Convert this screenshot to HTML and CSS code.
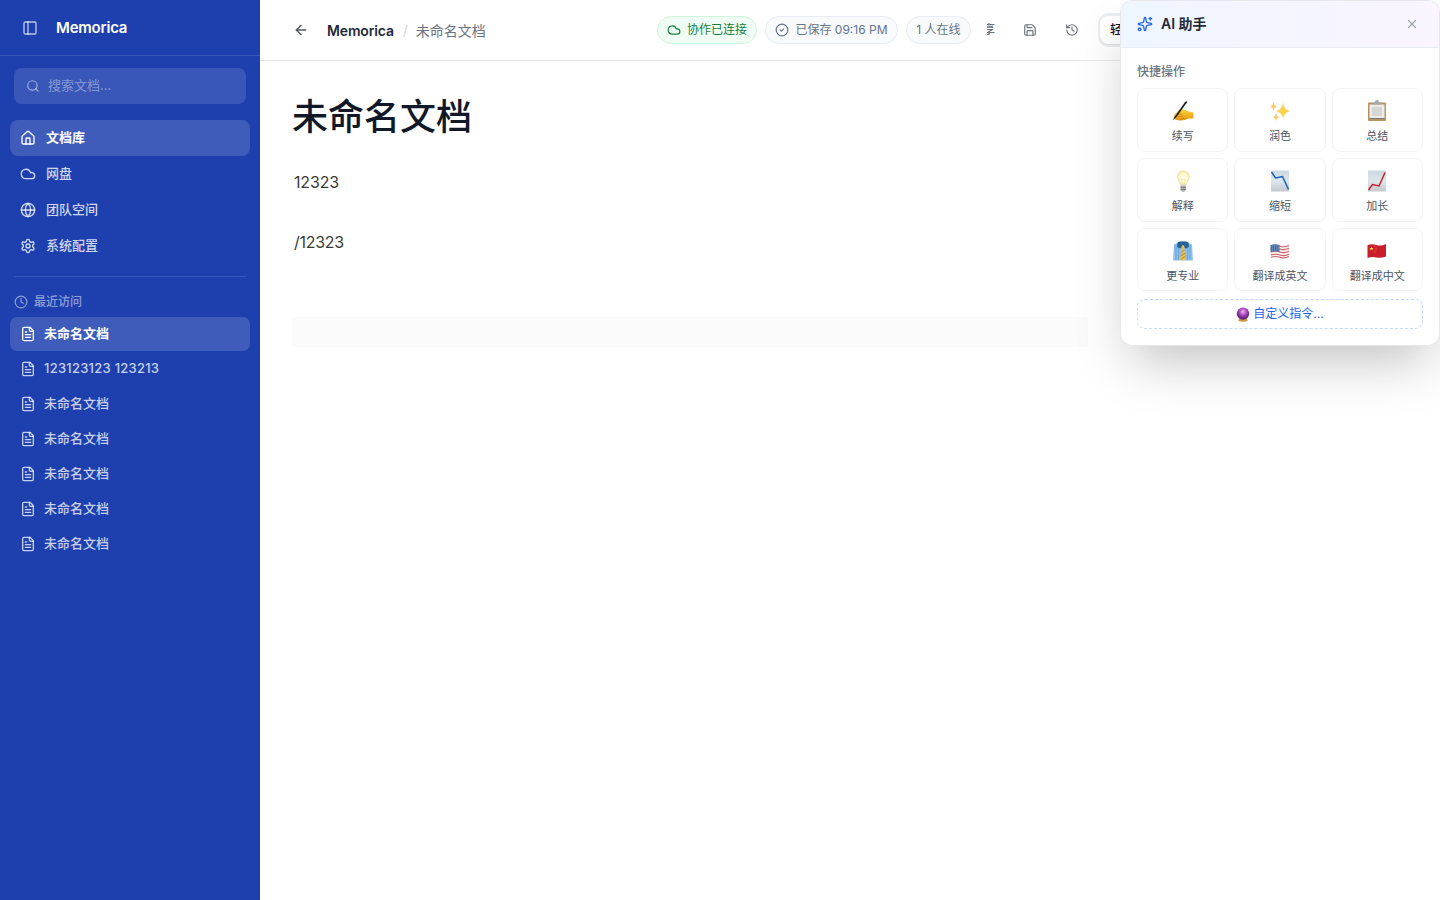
FILE: index.html
```html
<!DOCTYPE html>
<html lang="zh-CN">
<head>
<meta charset="utf-8">
<title>Memorica</title>
<link rel="stylesheet" href="styles.css">
</head>
<body>
<svg class="defs" width="0" height="0">
  <defs>
    <symbol id="cloud" viewBox="0 0 24 24"><path d="M17.5 19H9a7 7 0 1 1 6.71-9h1.79a4.5 4.5 0 1 1 0 9Z"/></symbol>
    <symbol id="file" viewBox="0 0 24 24"><path d="M15 2H6a2 2 0 0 0-2 2v16a2 2 0 0 0 2 2h12a2 2 0 0 0 2-2V7Z"/><path d="M14 2v4a2 2 0 0 0 2 2h4"/><path d="M10 9H8"/><path d="M16 13H8"/><path d="M16 17H8"/></symbol>
    <linearGradient id="paper" x1="0" y1="0" x2="0" y2="1"><stop offset="0" stop-color="#cbd8e0"/><stop offset=".5" stop-color="#dce6ed"/><stop offset="1" stop-color="#c2c9ce"/></linearGradient>
    <linearGradient id="hand" x1="0" y1="0" x2="0" y2="1"><stop offset="0" stop-color="#ffd83c"/><stop offset="1" stop-color="#e59410"/></linearGradient>
    <radialGradient id="bulb"><stop offset="0" stop-color="#fffff8"/><stop offset=".6" stop-color="#fffad0"/><stop offset="1" stop-color="#f6e7a2"/></radialGradient>
    <radialGradient id="orb" cx=".5" cy=".35"><stop offset="0" stop-color="#f3b9f0"/><stop offset=".5" stop-color="#b853c6"/><stop offset="1" stop-color="#6d2587"/></radialGradient>
  </defs>
</svg>
<div class="app">
  <aside class="sidebar">
    <div class="brand">
      <svg class="icon s16 toggle" viewBox="0 0 24 24"><rect x="3" y="3" width="18" height="18" rx="2"/><path d="M9 3v18"/></svg>
      <span>Memorica</span>
    </div>
    <div class="search">
      <svg class="icon s14" viewBox="0 0 24 24"><circle cx="11" cy="11" r="8"/><path d="m21 21-4.3-4.3"/></svg>
      <span>搜索文档...</span>
    </div>
    <nav class="nav">
      <a class="nav-item active"><svg class="icon s16" viewBox="0 0 24 24"><path d="M15 21v-8a1 1 0 0 0-1-1h-4a1 1 0 0 0-1 1v8"/><path d="M3 10a2 2 0 0 1 .709-1.528l7-5.999a2 2 0 0 1 2.582 0l7 5.999A2 2 0 0 1 21 10v9a2 2 0 0 1-2 2H5a2 2 0 0 1-2-2z"/></svg>文档库</a>
      <a class="nav-item"><svg class="icon s16"><use href="#cloud"/></svg>网盘</a>
      <a class="nav-item"><svg class="icon s16" viewBox="0 0 24 24"><circle cx="12" cy="12" r="10"/><path d="M12 2a14.5 14.5 0 0 0 0 20 14.5 14.5 0 0 0 0-20"/><path d="M2 12h20"/></svg>团队空间</a>
      <a class="nav-item"><svg class="icon s16" viewBox="0 0 24 24"><path d="M12.22 2h-.44a2 2 0 0 0-2 2v.18a2 2 0 0 1-1 1.73l-.43.25a2 2 0 0 1-2 0l-.15-.08a2 2 0 0 0-2.73.73l-.22.38a2 2 0 0 0 .73 2.73l.15.1a2 2 0 0 1 1 1.72v.51a2 2 0 0 1-1 1.74l-.15.09a2 2 0 0 0-.73 2.73l.22.38a2 2 0 0 0 2.73.73l.15-.08a2 2 0 0 1 2 0l.43.25a2 2 0 0 1 1 1.73V20a2 2 0 0 0 2 2h.44a2 2 0 0 0 2-2v-.18a2 2 0 0 1 1-1.73l.43-.25a2 2 0 0 1 2 0l.15.08a2 2 0 0 0 2.73-.73l.22-.39a2 2 0 0 0-.73-2.73l-.15-.08a2 2 0 0 1-1-1.74v-.5a2 2 0 0 1 1-1.74l.15-.09a2 2 0 0 0 .73-2.73l-.22-.38a2 2 0 0 0-2.73-.73l-.15.08a2 2 0 0 1-2 0l-.43-.25a2 2 0 0 1-1-1.73V4a2 2 0 0 0-2-2z"/><circle cx="12" cy="12" r="3"/></svg>系统配置</a>
    </nav>
    <div class="divider"></div>
    <div class="recent-title"><svg class="icon s14" viewBox="0 0 24 24"><circle cx="12" cy="12" r="10"/><path d="M12 6v6l4 2"/></svg>最近访问</div>
    <div class="docs">
      <a class="doc active"><svg class="icon s16"><use href="#file"/></svg>未命名文档</a>
      <a class="doc latin"><svg class="icon s16"><use href="#file"/></svg>123123123 123213</a>
      <a class="doc"><svg class="icon s16"><use href="#file"/></svg>未命名文档</a>
      <a class="doc"><svg class="icon s16"><use href="#file"/></svg>未命名文档</a>
      <a class="doc"><svg class="icon s16"><use href="#file"/></svg>未命名文档</a>
      <a class="doc"><svg class="icon s16"><use href="#file"/></svg>未命名文档</a>
      <a class="doc"><svg class="icon s16"><use href="#file"/></svg>未命名文档</a>
    </div>
  </aside>
  <main class="main">
    <header class="topbar">
      <svg class="icon s16 back" viewBox="0 0 24 24"><path d="m12 19-7-7 7-7"/><path d="M19 12H5"/></svg>
      <div class="crumbs"><b>Memorica</b><i>/</i><span>未命名文档</span></div>
      <div class="tools">
        <span class="pill online"><svg class="icon s14"><use href="#cloud"/></svg>协作已连接</span>
        <span class="pill saved"><svg class="icon s14" viewBox="0 0 24 24"><circle cx="12" cy="12" r="10"/><path d="m9 12 2 2 4-4"/></svg>已保存 09:16 PM</span>
        <span class="pill users">1 人在线</span>
        <button class="share"><span>享</span></button>
        <button class="tool"><svg class="icon s14" viewBox="0 0 24 24"><path d="M15.2 3a2 2 0 0 1 1.4.6l3.8 3.8a2 2 0 0 1 .6 1.4V19a2 2 0 0 1-2 2H5a2 2 0 0 1-2-2V5a2 2 0 0 1 2-2z"/><path d="M17 21v-7a1 1 0 0 0-1-1H8a1 1 0 0 0-1 1v7"/><path d="M7 3v4a1 1 0 0 0 1 1h7"/></svg></button>
        <button class="tool history"><svg class="icon s14" viewBox="0 0 24 24"><path d="M3 12a9 9 0 1 0 9-9 9.75 9.75 0 0 0-6.74 2.74L3 8"/><path d="M3 3v5h5"/><path d="M12 7v5l4 2"/></svg></button>
        <div class="modes"><span>轻量</span></div>
      </div>
    </header>
    <article class="editor">
      <h1>未命名文档</h1>
      <p>12323</p>
      <p class="slash">/12323</p>
      <div class="block"></div>
    </article>
  </main>
</div>
<section class="panel">
  <header class="panel-head">
    <svg class="icon s16 spark" viewBox="0 0 24 24"><path d="M11.017 2.814a1 1 0 0 1 1.966 0l1.051 5.558a2 2 0 0 0 1.594 1.594l5.558 1.051a1 1 0 0 1 0 1.966l-5.558 1.051a2 2 0 0 0-1.594 1.594l-1.051 5.558a1 1 0 0 1-1.966 0l-1.051-5.558a2 2 0 0 0-1.594-1.594l-5.558-1.051a1 1 0 0 1 0-1.966l5.558-1.051a2 2 0 0 0 1.594-1.594z"/><path d="M20 2v4"/><path d="M22 4h-4"/><circle cx="4" cy="20" r="2"/></svg>
    <b>AI 助手</b>
    <svg class="icon s14 close" viewBox="0 0 24 24"><path d="M18 6 6 18"/><path d="m6 6 12 12"/></svg>
  </header>
  <div class="panel-body">
    <div class="label">快捷操作</div>
    <div class="grid">
      <button class="card"><svg class="emoji" viewBox="0 0 22 22"><path d="M1.500 17c1-2 3-5.500 6.500-7.500 2.500-1.200 4 .5 7 1.500l6.500 1.500v6h-5c-3 1.500-7 2.500-10 1.800-2.500 0-4-1-5-3.300z" fill="url(#hand)"/><path d="m5 14.500 5-.5m-4 3 5-1m-3 3 5-1" stroke="#c87c0a" stroke-width=".7" fill="none"/><path d="M.5 20.500 2.500 17 13 2q1.500-1.500 2.500-.3L4.500 17Z" fill="#202326"/></svg><span>续写</span></button>
      <button class="card"><svg class="emoji" viewBox="0 0 22 22"><path d="M14 2q.5 7.500 7 9-6.500 1.500-7 9-.5-7.500-7-9 6.500-1.500 7-9z" fill="#ffd151"/><path d="M4.500 2q.4 3.500 3 4.500-2.600 1-3 4.500-.4-3.500-3-4.500 2.600-1 3-4.500zM7 13q.3 3 3 4-2.700 1-3 4-.3-3-3-4 2.700-1 3-4z" fill="#ffc568"/></svg><span>润色</span></button>
      <button class="card"><svg class="emoji" viewBox="0 0 22 22"><rect x="2" y="2.500" width="18" height="18.500" rx="1" fill="#b9935d"/><path d="M3.500 4.500h15v14h-15z" fill="#ececec"/><path d="M3.500 18h15v1h-15z" fill="#777"/><path d="M7 3.500q0-1.500 2-1.500 0-2 2-2t2 2q2 0 2 1.500V4.500H7z" fill="#a4aaae"/><path d="M6 7h10v9H6z" fill="#d6d6d6"/></svg><span>总结</span></button>
      <button class="card"><svg class="emoji" viewBox="0 0 22 22"><path d="M8.500 15c0-3-3-4-3-8.500C5.500 3 8 .8 11.200.8s6 2.200 6 5.700c0 4.500-3 5.500-3 8.500z" fill="url(#bulb)" stroke="#eadca5" stroke-width=".6"/><path d="m10 14-.7-5q1.900 1 3.800 0l-.6 5" fill="none" stroke="#f0d58d" stroke-width=".5"/><path d="M8.500 15.500h5.500V20l-1.700 1.800h-2L8.500 20z" fill="#a9aaa6"/><path d="M8.500 17.500H14m-5.500 2H14" stroke="#777" fill="none" stroke-width=".7"/></svg><span>解释</span></button>
      <button class="card"><svg class="emoji" viewBox="0 0 22 22"><path d="M2 .5h18v21H2z" fill="url(#paper)"/><path d="m2.500 2 4 6 7-1.500 6 13" stroke="#195ec6" stroke-width="1.500" fill="none"/></svg><span>缩短</span></button>
      <button class="card"><svg class="emoji" viewBox="0 0 22 22"><path d="M2 .5h18v21H2z" fill="url(#paper)"/><path d="m2.500 20 4-5.500 6.500 1.500 6-13.500" stroke="#cc1e27" stroke-width="1.500" fill="none"/></svg><span>加长</span></button>
      <button class="card"><svg class="emoji" viewBox="0 0 22 22"><path d="m2 4.500 6-3h6l6 3 1 16H1z" fill="#8fbfe9"/><path d="M4 5v15M6.500 5v15m9-15v15M18 5v15" stroke="#4f91cd" stroke-width=".6"/><path d="m5.500 2.500 2.500-1h6l2.500 1 .5 4.500-3.500 1.500L11 6 8.500 8.500 5 7z" fill="#286398"/><path d="m9.500 6 1.500-1 1.500 1-.5 3 2 10.500-3 1-3-1L10 9z" fill="#e9be46"/><path d="m9.500 12 3-2m-4 6 5-3m-4 6 4-3" stroke="#a07b30" stroke-width=".7"/></svg><span>更专业</span></button>
      <button class="card"><svg class="emoji" viewBox="0 0 22 22"><path d="M1.500 5q4.500-1.500 9 0t9.500-1v12.500q-5 2-9.500 1t-9 .5z" fill="#f1eeee"/><path d="M2 6.200q4.500-1.500 9 0t9-.8M2 9q4.500-1.500 9 0t9-.8M2 12q4.500-1.500 9 0t9-.8M2 15q4.500-1.500 9 0t9-.8M2 17.300q4.500-1.500 9 0t9-.8" fill="none" stroke="#d5616a" stroke-width="1.100"/><path d="M1.500 5q4.500-1.500 9 0v7q-4.500-1.500-9 0z" fill="#4a6fa5"/><path d="M3 6h7M3 8h7M3 10h7" stroke="#9ab0cf" stroke-width=".7" stroke-dasharray="1 1"/></svg><span>翻译成英文</span></button>
      <button class="card"><svg class="emoji" viewBox="0 0 22 22"><path d="M1.500 5q4.500-1.500 9 0t9.500-1v12.500q-5 2-9.500 1t-9 .5z" fill="#c91d2c"/><path d="m5.500 6.500.6 1.500h1.600l-1.300 1 .5 1.600-1.400-1-1.400 1 .5-1.600-1.300-1h1.600z" fill="#ffd34c"/><path d="M8.500 6h1m0 2h1m-1 2h1m-2 2h1" stroke="#e99b3c" stroke-width=".8"/></svg><span>翻译成中文</span></button>
    </div>
    <button class="custom"><svg class="orb" viewBox="0 0 14 16"><path d="m3 12-1 3q5 1.500 10 0l-1-3z" fill="#c9973c"/><circle cx="7" cy="7" r="6.600" fill="url(#orb)"/></svg>自定义指令...</button>
  </div>
</section>
</body>
</html>
```
FILE: styles.css
```css
* { box-sizing: border-box; }
body { margin: 0; overflow: hidden; background: #fff; font-family: Inter, "Noto Sans CJK SC", sans-serif; font-size: 13px; line-height: 1.5; color: #111827; }
button { font: inherit; background: none; border: 0; padding: 0; margin: 0; color: inherit; }
.defs { position: absolute; }
.icon { fill: none; stroke: currentColor; stroke-width: 2; stroke-linecap: round; stroke-linejoin: round; flex: none; }
.s16 { width: 16px; height: 16px; }
.s14 { width: 14px; height: 14px; }
.app { display: flex; height: 900px; }

.sidebar { width: 260px; flex: none; background: #1e40af; color: rgba(255,255,255,.8); }
.brand { height: 56px; display: flex; align-items: center; padding-left: 22px; gap: 18px; border-bottom: 1px solid rgba(255,255,255,.12); font-size: 15px; font-weight: 600; letter-spacing: -.2px; color: #fff; }
.brand span { padding-top: 1px; }
.toggle { color: rgba(255,255,255,.7); }
.search { margin: 12px 14px 16px; height: 36px; border-radius: 8px; background: rgba(255,255,255,.12); display: flex; align-items: center; gap: 8px; padding-left: 12px; color: rgba(255,255,255,.4); }
.search .icon { color: rgba(255,255,255,.5); }
.nav { padding: 0 10px; }
.nav-item { display: flex; align-items: center; height: 36px; gap: 10px; padding-left: 10px; border-radius: 8px; font-weight: 500; }
.nav-item.active, .doc.active { background: rgba(255,255,255,.15); color: #fff; font-weight: 600; }
.divider { height: 1px; margin: 12px 14px 0; background: rgba(255,255,255,.12); }
.recent-title { display: flex; align-items: center; gap: 6px; height: 18px; margin: 16px 14px 6px; font-size: 12px; font-weight: 500; color: rgba(255,255,255,.5); }
.docs { display: flex; flex-direction: column; gap: 1px; padding: 0 10px; }
.doc { height: 34px; display: flex; align-items: center; gap: 8px; padding-left: 10px; border-radius: 7px; font-weight: 500; color: rgba(255,255,255,.75); }
.doc.latin { letter-spacing: .25px; }

.main { flex: 1; min-width: 0; }
.topbar { height: 61px; display: flex; align-items: center; padding-left: 33px; border-bottom: 1px solid #e5e7eb; color: #6b7280; overflow: hidden; }
.back { color: #4b5563; }
.crumbs { display: flex; flex: none; align-items: center; gap: 9px; width: 159px; margin-left: 18px; padding-top: 1px; font-size: 14px; }
.crumbs b { font-weight: 600; letter-spacing: -.15px; color: #1f2937; }
.crumbs i { font-style: normal; color: #d1d5db; margin-right: -1px; }
.tools { display: flex; align-items: center; margin-left: 171px; gap: 8px; flex: none; }
.pill { height: 28px; display: flex; align-items: center; justify-content: center; gap: 6px; border: 1px solid #e8ecf4; border-radius: 14px; background: #f8fafc; font-size: 12px; color: #64748b; white-space: nowrap; }
.online { width: 100px; background: #f0fdf4; border-color: #d0f5dc; color: #15803d; }
.saved { width: 133px; }
.users { width: 65px; }
.share { width: 8px; height: 28px; overflow: hidden; display: flex; align-items: center; justify-content: flex-end; margin: 0 1px 0 8px; font-size: 12px; font-weight: 500; white-space: nowrap; }
.tool { width: 28px; height: 28px; display: flex; align-items: center; justify-content: center; margin-left: 12px; }
.tool.history { margin-left: 6px; }
.modes { height: 34px; width: 120px; flex: none; margin-left: 4px; padding: 2px; border-radius: 10px; background: #eeeff1; font-size: 12px; font-weight: 500; color: #111827; margin-right: -200px; }
.modes span { display: flex; align-items: center; width: 48px; height: 28px; padding-left: 10px; margin-top: 1px; border-radius: 8px; background: #fff; box-shadow: 0 1px 2px rgba(0,0,0,.08); }

.editor { padding: 29px 32px; }
h1 { margin: 0 0 25px; height: 55px; line-height: 55px; font-size: 36px; font-weight: 500; color: #111827; }
p { margin: 0 0 36px; padding-left: 2px; line-height: 24px; height: 24px; font-size: 16px; letter-spacing: -.15px; color: #3b3b36; }
.slash { letter-spacing: -.3px; }
.block { width: 796px; height: 30px; margin-top: 63px; border-radius: 2px; background: #fbfbfb; }

.panel { position: absolute; right: 0; top: 0; width: 320px; height: 346px; border: 1px solid #e5e7eb; border-radius: 12px; background: #fff; overflow: hidden; box-shadow: 0 25px 50px -12px rgba(0,0,0,.25); }
.panel-head { height: 47px; display: flex; align-items: center; padding: 0 20px 0 16px; gap: 8px; border-bottom: 1px solid #e8ebf4; background: linear-gradient(90deg, #eff6ff, #faf5ff); }
.panel-head b { font-size: 14px; font-weight: 600; padding-bottom: 1px; color: #1f2937; }
.spark { color: #2563eb; }
.close { margin-left: auto; color: #9ca3af; }
.panel-body { padding: 15px 16px; }
.label { height: 18px; line-height: 18px; margin-bottom: 7px; font-size: 12px; font-weight: 500; color: #6b7280; }
.grid { display: grid; grid-template-columns: repeat(3, 1fr); gap: 6px; }
.card { height: 64px; display: flex; flex-direction: column; align-items: center; padding-top: 11px; gap: 6px; border: 1px solid #f3f4f6; border-radius: 8px; font-size: 11px; line-height: 17px; color: #4b5563; }
.card:nth-child(n+7) { height: 63px; }
.emoji { width: 22px; height: 22px; }
.custom { width: 100%; height: 30px; margin-top: 8px; display: flex; align-items: center; justify-content: center; gap: 3px; border: 1px dashed #bfdbfe; border-radius: 8px; font-size: 12px; color: #2563eb; }
.orb { width: 14px; height: 15px; }
```
